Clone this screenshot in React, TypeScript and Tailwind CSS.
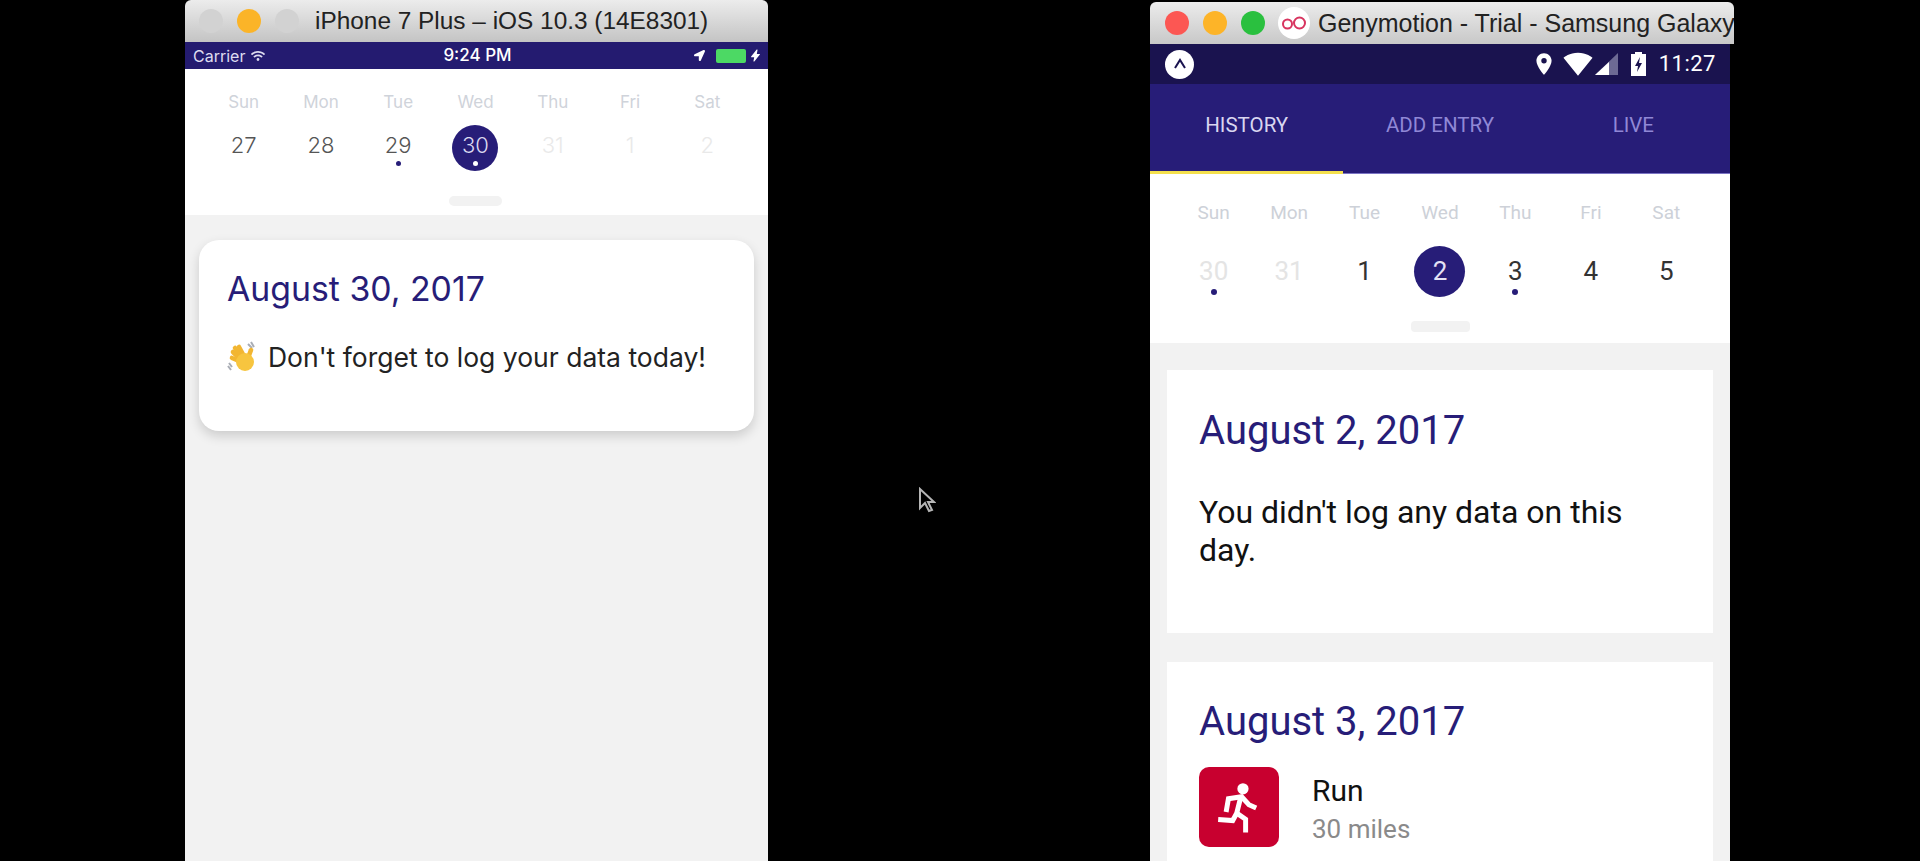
import { FaLocationArrow, FaWifi } from 'react-icons/fa';
import { IoFlash } from 'react-icons/io5';
import { MdPlace, MdSignalWifi4Bar } from 'react-icons/md';

const NAVY = 'text-[#271d78]';
const days = ['Sun', 'Mon', 'Tue', 'Wed', 'Thu', 'Fri', 'Sat'];

type CalDay = { n: number; tone: 'dark' | 'faint' | 'sel'; dot?: boolean };

const iosDays: CalDay[] = [
  { n: 27, tone: 'dark' },
  { n: 28, tone: 'dark' },
  { n: 29, tone: 'dark', dot: true },
  { n: 30, tone: 'sel', dot: true },
  { n: 31, tone: 'faint' },
  { n: 1, tone: 'faint' },
  { n: 2, tone: 'faint' },
];

const androidDays: CalDay[] = [
  { n: 30, tone: 'faint', dot: true },
  { n: 31, tone: 'faint' },
  { n: 1, tone: 'dark' },
  { n: 2, tone: 'sel' },
  { n: 3, tone: 'dark', dot: true },
  { n: 4, tone: 'dark' },
  { n: 5, tone: 'dark' },
];

function TrafficLight({ color }: { color: string }) {
  return <span className={`h-6 w-6 shrink-0 rounded-full ${color}`} />;
}

function WavingHand() {
  return (
    <svg viewBox="0 0 30 32" className="h-8 w-[30px] shrink-0">
      <path d="M21 3l4 4M24 1l3 5M2 22l3 4M1 25l3 4" stroke="#a9adb5" strokeWidth="2" fill="none" />
      <g stroke="#f2b632" strokeLinecap="round" fill="none">
        <path d="M14 19L6 11" strokeWidth="4.6" />
        <path d="M16 18L8 7" strokeWidth="4.6" />
        <path d="M18 17L12 6" strokeWidth="4.6" />
        <path d="M21 17l3-8" strokeWidth="4.6" />
        <path d="M12 20L5 17" strokeWidth="4.6" />
      </g>
      <circle cx="18" cy="21" r="9" fill="#f7c53f" />
    </svg>
  );
}

function RunIcon() {
  return (
    <svg viewBox="10 15 242 236" className="h-[80px] w-[80px]" fill="none" stroke="#fff" strokeWidth="15">
      <circle cx="143" cy="78" r="17" fill="#fff" stroke="none" />
      <path d="M92 148l7-40 40-6 22 24 22 10" />
      <path d="M137 100l-13 52-12 22-44-3" />
      <path d="M122 150l29 20v40" />
    </svg>
  );
}

function BatteryIcon() {
  return (
    <svg viewBox="0 0 15 24" className="h-6 w-[15px]">
      <path d="M4 0h7v2h4v22H0V2h4z" fill="#fff" />
      <path d="M9 5L4 14h3l-1 6 5-9H8z" fill="#1a134f" />
    </svg>
  );
}

function GenymotionLogo() {
  return (
    <span className="flex h-[32px] w-[32px] shrink-0 items-center justify-center rounded-full bg-white">
      <svg viewBox="0 0 26 14" className="h-[14px] w-[26px]" fill="none" stroke="#d8345f" strokeWidth="2">
        <circle cx="6.5" cy="8" r="4.5" />
        <circle cx="18.5" cy="7" r="5.5" />
      </svg>
    </span>
  );
}

export default function App() {
  return (
    <div className="relative flex h-[861px] w-[1920px] overflow-hidden bg-black">
      {/* iOS simulator */}
      <div className="ml-[185px] flex h-full w-[583px] flex-col font-['Inter',sans-serif]">
        <div className="flex h-[42px] shrink-0 items-center rounded-t-md bg-gradient-to-b from-[#ececec] to-[#c4c4c4] pl-[14px]">
          <div className="flex items-center gap-[14px]">
            <TrafficLight color="bg-[#d2d2d2]" />
            <TrafficLight color="bg-[#fbb428]" />
            <TrafficLight color="bg-[#d2d2d2]" />
          </div>
          <span className="ml-[16px] whitespace-nowrap font-['Liberation_Sans',sans-serif] text-[24.4px] leading-none text-[#222]">
            iPhone 7 Plus – iOS 10.3 (14E8301)
          </span>
        </div>
        <div className="flex h-[27px] shrink-0 items-center justify-between bg-[#241b70] pl-2 pr-[6px] text-white">
          <div className="flex w-[120px] items-center gap-[6px] text-[16px] text-[#dedcf0]">
            Carrier <FaWifi className="h-[14px] w-[14px]" />
          </div>
          <span className="text-[17px] font-medium">9:24 PM</span>
          <div className="flex w-[120px] items-center justify-end gap-[3px]">
            <FaLocationArrow className="mr-2 h-[11px] w-[11px]" />
            <span className="h-[14px] w-[30px] rounded-[2px] bg-[#4cd964]" />
            <IoFlash className="h-[13px] w-[13px]" />
          </div>
        </div>
        <div className="flex h-[146px] shrink-0 flex-col bg-white pl-5 pr-[22px]">
          <div className="mt-[23px] grid grid-cols-7 text-center text-[17px] leading-5 text-[#cfd3da]">
            {days.map((d) => (
              <span key={d}>{d}</span>
            ))}
          </div>
          <div className="mt-[13px] grid grid-cols-7">
            {iosDays.map((d) => (
              <div key={d.n} className="flex justify-center">
                <div
                  className={`flex h-[46px] w-[46px] flex-col items-center rounded-full pt-[6px] text-[22px] font-light leading-7 ${
                    d.tone === 'sel' ? 'bg-[#271d78] text-[#dcdaf0]' : d.tone === 'dark' ? 'text-[#555]' : 'text-[#e9e9e9]'
                  }`}
                >
                  {d.n}
                  {d.dot && (
                    <span className={`mt-[2px] h-[5px] w-[5px] rounded-full ${d.tone === 'sel' ? 'bg-white' : 'bg-[#271d78]'}`} />
                  )}
                </div>
              </div>
            ))}
          </div>
          <span className="mx-auto mt-[25px] h-[10px] w-[53px] rounded-full bg-[#f2f2f2]" />
        </div>
        <div className="flex-1 bg-[#f2f2f2] px-[14px] pt-[25px]">
          <div className="flex h-[191px] flex-col rounded-[20px] bg-white px-[28px] pt-[29px] shadow-[0_5px_12px_rgba(0,0,0,0.16)]">
            <h2 className={`text-[33.8px] leading-10 ${NAVY}`}>August 30, 2017</h2>
            <div className="mt-[32px] flex items-center gap-[11px] text-[26.5px] leading-8 text-[#222]">
              <WavingHand />
              <span className="whitespace-nowrap">Don't forget to log your data today!</span>
            </div>
          </div>
        </div>
      </div>

      {/* Genymotion window */}
      <div className="ml-[382px] flex h-full w-[584px] flex-col overflow-hidden pt-[2px] font-['Roboto',sans-serif]">
        <div className="flex h-[42px] shrink-0 items-center overflow-hidden rounded-t-md bg-gradient-to-b from-[#ececec] to-[#c8c8c8] pl-[15px]">
          <div className="flex items-center gap-[14px]">
            <TrafficLight color="bg-[#fc5753]" />
            <TrafficLight color="bg-[#fdb428]" />
            <TrafficLight color="bg-[#2ac03f]" />
          </div>
          <span className="ml-[13px]">
            <GenymotionLogo />
          </span>
          <span className="ml-[8px] whitespace-nowrap font-['Liberation_Sans',sans-serif] text-[25px] leading-none text-[#222]">
            Genymotion - Trial - Samsung Galaxy
          </span>
        </div>
        <div className="w-[580px]">
          <div className="flex h-[40px] items-center justify-between bg-[#1a134f] pl-[15px] pr-[14px] text-white">
            <span className="flex h-[29px] w-[29px] items-center justify-center rounded-full bg-white">
              <svg viewBox="0 0 16 16" className="h-4 w-4" fill="none" stroke="#1a134f" strokeWidth="2">
                <path d="M3 12l5-8 5 8" />
              </svg>
            </span>
            <div className="flex items-center">
              <MdPlace className="h-[26px] w-[26px]" />
              <MdSignalWifi4Bar className="ml-[6px] h-[30px] w-[30px]" />
              <svg viewBox="0 0 23 22" className="ml-[2px] h-[22px] w-[23px]">
                <path d="M23 0v22H0z" fill="#6d6a94" />
                <path d="M14 9v13H0z" fill="#fff" />
              </svg>
              <span className="ml-[13px]">
                <BatteryIcon />
              </span>
              <span className="ml-[13px] text-[22px] leading-none tracking-[0.5px]">11:27</span>
            </div>
          </div>
          <div className="grid h-[90px] grid-cols-3 border-b-[1px] border-[#7b74c4] bg-[#271d78] text-center text-[20.5px]">
            <div className="relative pt-[29px] leading-6 text-[#d9d6f0]">
              HISTORY
              <span className="absolute inset-x-0 bottom-[-1px] h-[3px] bg-[#f4e04d]" />
            </div>
            <div className="pt-[29px] leading-6 text-[#9088d6]">ADD ENTRY</div>
            <div className="pt-[29px] leading-6 text-[#9088d6]">LIVE</div>
          </div>
          <div className="flex h-[169px] flex-col bg-white px-[26px]">
            <div className="mt-[27px] grid grid-cols-7 text-center text-[19px] leading-6 text-[#cdd1d8]">
              {days.map((d) => (
                <span key={d}>{d}</span>
              ))}
            </div>
            <div className="mt-[21px] grid grid-cols-7">
              {androidDays.map((d) => (
                <div key={d.n} className="flex justify-center">
                  <div
                    className={`flex h-[51px] w-[51px] flex-col items-center rounded-full pt-[9px] text-[26px] leading-8 ${
                      d.tone === 'sel' ? 'bg-[#271d78] text-[#e4e2f5]' : d.tone === 'dark' ? 'text-[#333]' : 'text-[#e4e4e4]'
                    }`}
                  >
                    {d.n}
                    {d.dot && <span className="mt-[2px] h-[6px] w-[6px] rounded-full bg-[#271d78]" />}
                  </div>
                </div>
              ))}
            </div>
            <span className="mx-auto mt-[24px] h-[11px] w-[59px] rounded-sm bg-[#f2f2f2]" />
          </div>
          <div className="flex flex-col gap-[29px] bg-[#f2f2f2] px-[17px] pt-[27px]">
            <div className="h-[263px] bg-white px-8 pt-[40px]">
              <h2 className={`text-[40px] leading-[42px] ${NAVY}`}>August 2, 2017</h2>
              <p className="mt-[41px] text-[32px] leading-[38px] text-[#111]">You didn't log any data on this day.</p>
            </div>
            <div className="h-[260px] bg-white px-8 pt-[39px]">
              <h2 className={`text-[40px] leading-[42px] ${NAVY}`}>August 3, 2017</h2>
              <div className="mt-[24px] flex items-start">
                <span className="block h-[80px] w-[80px] rounded-[10px] bg-[#c8002f]">
                  <RunIcon />
                </span>
                <div className="ml-[33px] pt-[4px]">
                  <div className="text-[30px] leading-10 text-[#111]">Run</div>
                  <div className="text-[26px] leading-9 text-[#8a8a8a]">30 miles</div>
                </div>
              </div>
            </div>
          </div>
        </div>
      </div>

      {/* mouse pointer */}
      <svg viewBox="0 0 18 26" className="absolute left-[918px] top-[487px] h-[26px] w-[18px]" fill="#000" stroke="#b5b5b5" strokeWidth="2">
        <path d="M2 2v19l5-5 4 8 3-1-4-8h6z" />
      </svg>
    </div>
  );
}
